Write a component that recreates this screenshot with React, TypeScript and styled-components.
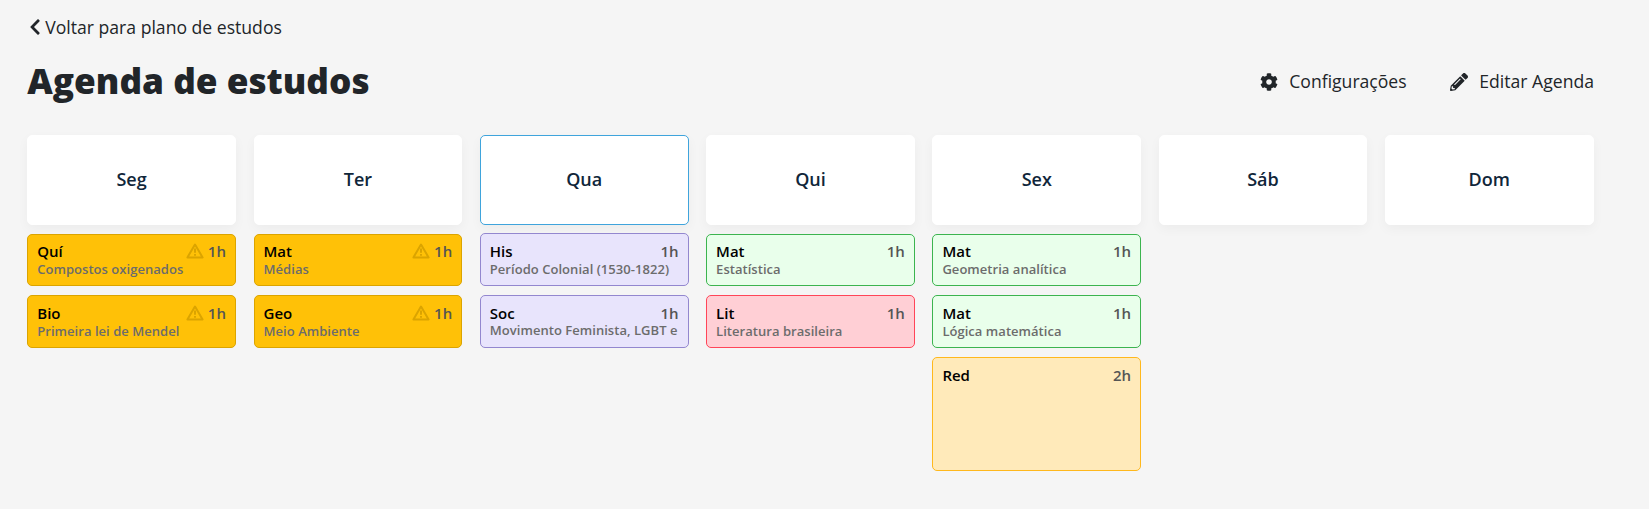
import React from 'react';
import styled, { createGlobalStyle } from 'styled-components';
import { FaChevronLeft, FaCog, FaPencilAlt } from 'react-icons/fa';

const GlobalStyle = createGlobalStyle`
  * { box-sizing: border-box; }
  body {
    margin: 0;
    background: #f5f5f5;
    color: #212529;
    font-family: 'Open Sans', sans-serif;
    font-size: 17.6px;
  }
`;

const Page = styled.main`
  min-height: 509px;
  padding: 13.5px 55px 0 27.25px;
`;

const BackLink = styled.a`
  display: flex;
  align-items: center;
  height: 27px;
  padding-left: 2px;
  gap: 4px;
  color: #212529;
  svg { width: 12px; height: 18px; }
`;

const Header = styled.header`
  display: flex;
  justify-content: space-between;
  align-items: center;
  height: 48px;
  margin-top: 17px;
`;

const Title = styled.h1`
  margin: 0 0 3px;
  font-size: 35.2px;
  font-weight: 800;
  line-height: 48px;
`;

const Actions = styled.nav`
  display: flex;
  gap: 43.7px;
`;

const Action = styled.a`
  display: flex;
  align-items: center;
  gap: 11px;
  line-height: 27px;
  svg { width: 18px; height: 18px; }
`;

const Week = styled.section`
  display: grid;
  grid-template-columns: repeat(7, 208.7px);
  column-gap: 17.6px;
  margin-top: 29.5px;
`;

const Day = styled.div`
  display: flex;
  flex-direction: column;
  gap: 9px;
`;

const DayName = styled.div<{ $today?: boolean }>`
  display: flex;
  align-items: center;
  justify-content: center;
  height: 89.6px;
  margin-bottom: ${(p) => (p.$today ? '-0.2px' : '0')};
  padding-bottom: 2px;
  border: 1px solid ${(p) => (p.$today ? '#3fa4dc' : '#fff')};
  border-radius: 5px;
  background: #fff;
  box-shadow: 0 4px 12px rgba(0, 0, 0, 0.04);
  color: #10263a;
  font-size: 18px;
  font-weight: 600;
`;

const tones = {
  late: ['#ffc107', '#dba400'],
  human: ['#e8e4fc', '#9387cf'],
  math: ['#e9ffeb', '#3cb44f'],
  language: ['#ffcfd5', '#ff4558'],
  essay: ['#ffeaba', '#ffb81c'],
};

type Tone = keyof typeof tones;

const Card = styled.article<{ $tone: Tone; $hours: number }>`
  height: ${(p) => (p.$hours === 2 ? 114.2 : 52.6)}px;
  padding: 7.4px 9px 0;
  border: 1px solid ${(p) => tones[p.$tone][1]};
  border-radius: 5px;
  background: ${(p) => tones[p.$tone][0]};
  overflow: hidden;
`;

const CardTop = styled.div`
  display: flex;
  align-items: center;
  height: 19px;
  font-size: 15px;
  font-weight: 600;
`;

const Subject = styled.span`
  flex: 1;
  color: #000;
`;

const Hours = styled.span`
  color: #555;
`;

const Topic = styled.div`
  height: 17px;
  overflow: hidden;
  white-space: nowrap;
  color: #6c6c6c;
  font-size: 13px;
  font-weight: 600;
  letter-spacing: 0.04px;
  line-height: 17px;
`;

const Warning = styled.svg`
  width: 18px;
  height: 16px;
  margin-right: 4px;
  fill: none;
  stroke: #dba400;
  stroke-width: 2;
  stroke-linejoin: round;
`;

const WarningIcon = () => (
  <Warning viewBox="0 0 18 16">
    <path d="M9 1.6 L16.6 14.4 H1.4 Z" />
    <path d="M9 5.6 V9.7 M9 10.9 V12.8" />
  </Warning>
);

interface Item { subject: string; topic?: string; tone: Tone; hours?: number }

const week: { name: string; today?: boolean; items: Item[] }[] = [
  { name: 'Seg', items: [
    { subject: 'Quí', topic: 'Compostos oxigenados', tone: 'late' },
    { subject: 'Bio', topic: 'Primeira lei de Mendel', tone: 'late' },
  ] },
  { name: 'Ter', items: [
    { subject: 'Mat', topic: 'Médias', tone: 'late' },
    { subject: 'Geo', topic: 'Meio Ambiente', tone: 'late' },
  ] },
  { name: 'Qua', today: true, items: [
    { subject: 'His', topic: 'Período Colonial (1530-1822)', tone: 'human' },
    { subject: 'Soc', topic: 'Movimento Feminista, LGBT e', tone: 'human' },
  ] },
  { name: 'Qui', items: [
    { subject: 'Mat', topic: 'Estatística', tone: 'math' },
    { subject: 'Lit', topic: 'Literatura brasileira', tone: 'language' },
  ] },
  { name: 'Sex', items: [
    { subject: 'Mat', topic: 'Geometria analítica', tone: 'math' },
    { subject: 'Mat', topic: 'Lógica matemática', tone: 'math' },
    { subject: 'Red', tone: 'essay', hours: 2 },
  ] },
  { name: 'Sáb', items: [] },
  { name: 'Dom', items: [] },
];

export default function App() {
  return (
    <Page>
      <GlobalStyle />
      <BackLink><FaChevronLeft />Voltar para plano de estudos</BackLink>
      <Header>
        <Title>Agenda de estudos</Title>
        <Actions>
          <Action><FaCog />Configurações</Action>
          <Action><FaPencilAlt />Editar Agenda</Action>
        </Actions>
      </Header>
      <Week>
        {week.map((day) => (
          <Day key={day.name}>
            <DayName $today={day.today}>{day.name}</DayName>
            {day.items.map(({ subject, topic, tone, hours = 1 }, i) => (
              <Card key={i} $tone={tone} $hours={hours}>
                <CardTop>
                  <Subject>{subject}</Subject>
                  {tone === 'late' && <WarningIcon />}
                  <Hours>{hours}h</Hours>
                </CardTop>
                {topic && <Topic>{topic}</Topic>}
              </Card>
            ))}
          </Day>
        ))}
      </Week>
    </Page>
  );
}
